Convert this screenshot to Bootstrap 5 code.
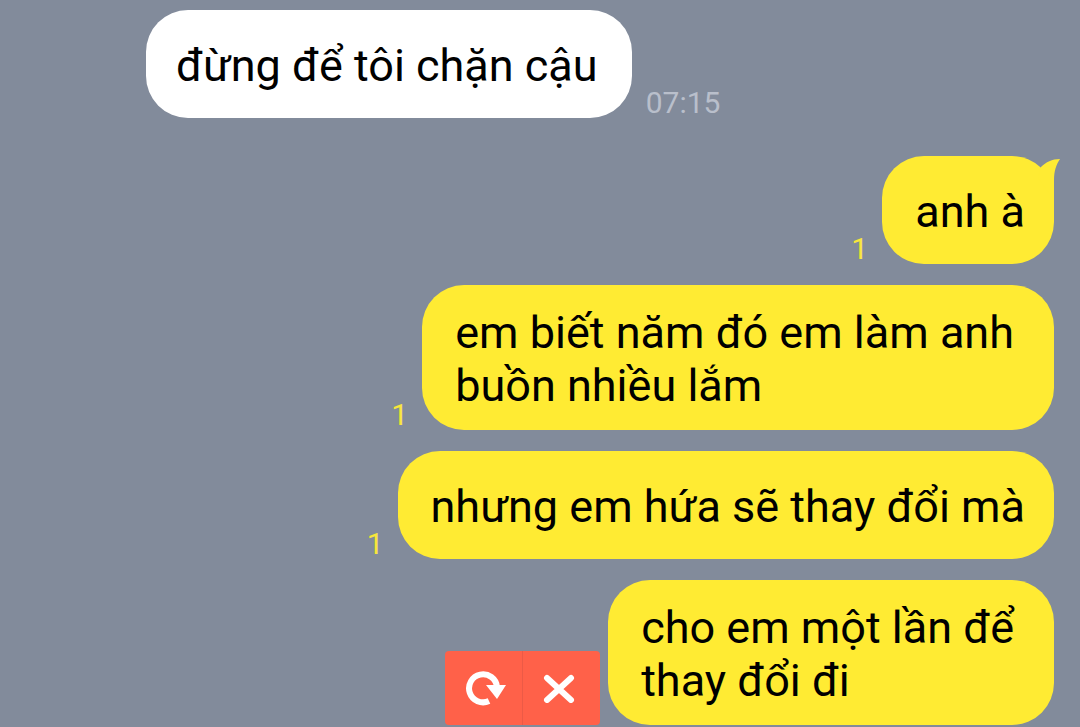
<!DOCTYPE html>
<html lang="vi">
<head>
<meta charset="utf-8">
<meta name="viewport" content="width=device-width, initial-scale=1">
<title>Chat</title>
<link href="https://cdn.jsdelivr.net/npm/bootstrap@5.3.0/dist/css/bootstrap.min.css" rel="stylesheet">
<style>
  body { background: #828b9b; font-family: Roboto, "Noto Sans", sans-serif; color: #000; }
  .chat-log { padding: 10px 26px 2px; gap: 21px; }
  .msg-row { gap: 14px; }
  .msg-in { margin-left: 120px; margin-bottom: 17px; }
  .bubble { min-height: 108px; padding: 21px 29px 18px 33px; border-radius: 42px; background: #ffeb33; font-size: 45px; line-height: 53px; }
  .bubble-in { background: #fff; padding-left: 30px; padding-right: 34px; }
  .bubble-wrapped { padding-right: 40px; }
  .tail { right: -6px; top: 2px; }
  .meta { font-size: 30px; line-height: 30px; color: #b9bfcb; }
  .unread { color: #f7e73c; }
  .tools-row { gap: 8px; }
  .tool-btn { width: 78px; height: 74px; padding: 0 0 0 4px; border: 0; border-radius: 4px; background: #ff6149; color: #fff; }
  .tool-btn:hover, .tool-btn:active { background: #f4553d !important; color: #fff; }
  .tool-btn + .tool-btn { padding: 0 6px 0 0; border-left: 1px solid #ec5a46; }
</style>
</head>
<body>
<main class="chat-log d-flex flex-column">
  <div class="msg-row msg-in d-flex align-items-end">
    <div class="bubble bubble-in d-flex align-items-center">đừng để tôi chặn cậu</div>
    <time class="meta" datetime="07:15">07:15</time>
  </div>

  <div class="msg-row d-flex justify-content-end align-items-end">
    <span class="meta unread">1</span>
    <div class="bubble position-relative d-flex align-items-center">anh à
      <svg class="tail position-absolute" width="22" height="42" viewBox="0 0 22 42" aria-hidden="true"><path d="M3 9C8 4 14 1 22 1C18 7 16 13 16 22V42L0 20Z" fill="#ffeb33"/></svg>
    </div>
  </div>

  <div class="msg-row d-flex justify-content-end align-items-end">
    <span class="meta unread">1</span>
    <div class="bubble bubble-wrapped">em biết năm đó em làm anh<br>buồn nhiều lắm</div>
  </div>

  <div class="msg-row d-flex justify-content-end align-items-end">
    <span class="meta unread">1</span>
    <div class="bubble d-flex align-items-center">nhưng em hứa sẽ thay đổi mà</div>
  </div>

  <div class="tools-row d-flex justify-content-end align-items-end">
    <div class="btn-group" role="group">
      <button type="button" class="btn tool-btn d-flex align-items-center justify-content-center" aria-label="Gửi lại">
        <svg width="40" height="36" viewBox="0 0 40 36" aria-hidden="true"><path d="M23 31A14 14 0 1 1 31 17" fill="none" stroke="#fff" stroke-width="6"/><path d="M20 15H40L31 29Z" fill="#fff"/></svg>
      </button>
      <button type="button" class="btn tool-btn d-flex align-items-center justify-content-center" aria-label="Xóa">
        <svg width="32" height="30" viewBox="0 0 32 30" aria-hidden="true"><path d="M4 5L28 27M28 5L4 27" fill="none" stroke="#fff" stroke-width="6" stroke-linecap="round"/></svg>
      </button>
    </div>
    <div class="bubble bubble-wrapped">cho em một lần để<br>thay đổi đi</div>
  </div>
</main>
<script src="https://cdn.jsdelivr.net/npm/bootstrap@5.3.0/dist/js/bootstrap.bundle.min.js"></script>
</body>
</html>
